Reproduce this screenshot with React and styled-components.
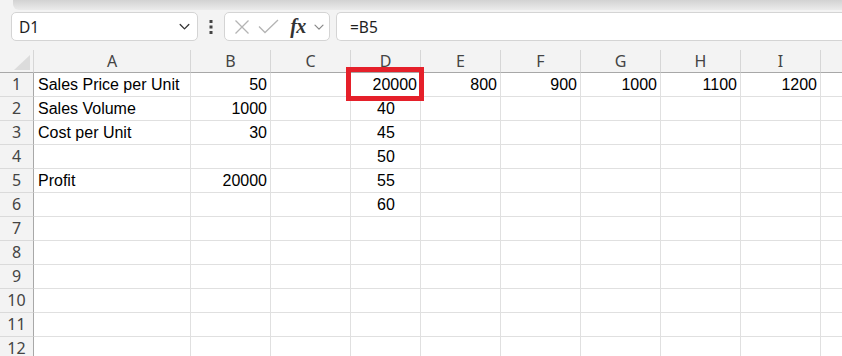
import React from "react";
import styled, { createGlobalStyle } from "styled-components";

const GlobalStyle = createGlobalStyle`
  body {
    margin: 0;
    background: #f3f3f3;
    overflow: hidden;
  }
`;

const Page = styled.div`
  width: 842px;
  height: 356px;
  overflow: hidden;
  background: #f3f3f3;
  font-family: "Noto Sans", "Liberation Sans", sans-serif;
`;

const TopShade = styled.div`
  height: 10px;
  margin-left: 13px;
  background: linear-gradient(#d2d2d2, #ebebeb);
  border-bottom-left-radius: 6px;
`;

const FormulaBar = styled.div`
  display: flex;
  align-items: center;
  height: 29px;
  margin-top: 2px;
  padding-left: 11px;
`;

const Box = styled.div`
  display: flex;
  align-items: center;
  box-sizing: border-box;
  height: 29px;
  background: #fff;
  border: 1px solid #d4d4d4;
  border-radius: 5px;
  color: #1f1f1f;
  font-size: 15.5px;
`;

const NameBox = styled(Box)`
  width: 187px;
  padding: 0 6px 0 7px;
  justify-content: space-between;
`;

const Dots = styled.div`
  width: 26px;
  display: flex;
  justify-content: center;
`;

const IconBox = styled(Box)`
  width: 106px;
  padding-left: 6px;
`;

const IconSlot = styled.span`
  display: flex;
  align-items: center;
  justify-content: center;
  width: ${(p) => p.$w}px;
`;

const Fx = styled.span`
  font-family: "Liberation Serif", serif;
  font-style: italic;
  font-weight: bold;
  font-size: 20px;
  color: #333;
  letter-spacing: -0.5px;
  line-height: 1;
  margin-bottom: 2px;
`;

const FormulaInput = styled(Box)`
  flex: 1;
  margin-left: 6px;
  padding-left: 13px;
  border-right: none;
  border-radius: 5px 0 0 5px;
`;

const Sheet = styled.div`
  margin-top: 9px;
  display: grid;
  grid-template-columns: 34px 157px 80px 80px 70px repeat(6, 80px);
  width: 900px;
`;

const Corner = styled.div`
  box-sizing: border-box;
  height: 23px;
  border-right: 1px solid #d6d6d6;
  border-bottom: 1px solid #a8a8a8;
  display: flex;
  align-items: flex-end;
  justify-content: flex-end;
  padding: 0 3px 2px 0;
`;

const ColHead = styled.div`
  box-sizing: border-box;
  height: 23px;
  border-right: 1px solid #d6d6d6;
  border-bottom: 1px solid #a8a8a8;
  text-align: center;
  font-size: 16px;
  line-height: 22px;
  color: #444;
`;

const RowHead = styled.div`
  box-sizing: border-box;
  height: 24px;
  border-right: 1px solid #a8a8a8;
  border-bottom: 1px solid #dadada;
  text-align: center;
  font-size: 16px;
  line-height: 23px;
  color: #444;
`;

const Cell = styled.div`
  position: relative;
  box-sizing: border-box;
  height: 24px;
  background: #fff;
  border-right: 1px solid #e0e0e0;
  border-bottom: 1px solid #e0e0e0;
  padding: 0 3px 0 4px;
  font-family: "Liberation Sans", Arial, sans-serif;
  font-size: 16px;
  line-height: 23px;
  color: #000;
  white-space: nowrap;
  text-align: ${(p) => p.$align};
`;

const Highlight = styled.div`
  position: absolute;
  z-index: 2;
  left: -5px;
  right: -4px;
  top: -6px;
  bottom: -5px;
  border: 5px solid #e5202a;
  pointer-events: none;
`;

const Chevron = ({ size = 12, color = "#444" }) => (
  <svg width={size} height={size} viewBox="0 0 12 12" fill="none">
    <path d="M2 4.2 6 8.2 10 4.2" stroke={color} strokeWidth="1.2" strokeLinecap="round" strokeLinejoin="round" />
  </svg>
);

const columns = ["A", "B", "C", "D", "E", "F", "G", "H", "I", "J"];

const data = [
  ["Sales Price per Unit", "50", "", "20000", "800", "900", "1000", "1100", "1200", ""],
  ["Sales Volume", "1000", "", "40"],
  ["Cost per Unit", "30", "", "45"],
  ["", "", "", "50"],
  ["Profit", "20000", "", "55"],
  ["", "", "", "60"],
];

const alignFor = (value, row, col) => {
  if (col === 3 && row > 0) return "center";
  return /^\d+$/.test(value) ? "right" : "left";
};

export default function App() {
  const rows = Array.from({ length: 12 }, (_, i) => data[i] || []);
  return (
    <Page>
      <GlobalStyle />
      <TopShade />
      <FormulaBar>
        <NameBox>
          <span>D1</span>
          <Chevron size={13} color="#333" />
        </NameBox>
        <Dots>
          <svg width="4" height="14" viewBox="0 0 4 14">
            <rect x="0.5" y="0" width="3" height="3" fill="#444" />
            <rect x="0.5" y="5.5" width="3" height="3" fill="#444" />
            <rect x="0.5" y="11" width="3" height="3" fill="#444" />
          </svg>
        </Dots>
        <IconBox>
          <IconSlot $w={22}>
            <svg width="16" height="16" viewBox="0 0 16 16">
              <path d="M1.5 1.5 14.5 14.5M14.5 1.5 1.5 14.5" stroke="#b4b4b4" strokeWidth="1.3" />
            </svg>
          </IconSlot>
          <IconSlot $w={30}>
            <svg width="21" height="15" viewBox="0 0 21 15">
              <path d="M1 7.5 7 13.5 20 1" stroke="#b4b4b4" strokeWidth="1.3" fill="none" />
            </svg>
          </IconSlot>
          <IconSlot $w={30}>
            <Fx>fx</Fx>
          </IconSlot>
          <IconSlot $w={12}>
            <Chevron size={12} color="#888" />
          </IconSlot>
        </IconBox>
        <FormulaInput>=B5</FormulaInput>
      </FormulaBar>
      <Sheet>
        <Corner>
          <svg width="16" height="15" viewBox="0 0 16 15">
            <path d="M16 0V15H0Z" fill="#dcdcdc" />
          </svg>
        </Corner>
        {columns.map((c) => (
          <ColHead key={c}>{c}</ColHead>
        ))}
        {rows.map((row, r) => (
          <React.Fragment key={r}>
            <RowHead>{r + 1}</RowHead>
            {columns.map((c, ci) => {
              const value = row[ci] || "";
              return (
                <Cell key={c} $align={alignFor(value, r, ci)}>
                  {value}
                  {r === 0 && ci === 3 && <Highlight />}
                </Cell>
              );
            })}
          </React.Fragment>
        ))}
      </Sheet>
    </Page>
  );
}
